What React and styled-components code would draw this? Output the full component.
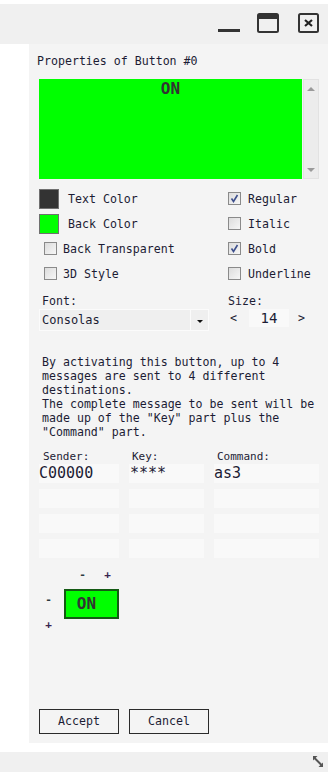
import React from "react";
import styled, { createGlobalStyle } from "styled-components";

const GlobalStyle = createGlobalStyle`
  html, body {
    margin: 0;
    padding: 0;
    background: #ffffff;
  }
  body {
    font-family: "DejaVu Sans Mono", "Liberation Mono", monospace;
    color: #1c1c34;
  }
`;

const Page = styled.div`
  width: 334px;
  padding-top: 4px;
`;

const TopBar = styled.div`
  width: 328px;
  height: 40px;
  background: #f0f0f0;
  display: flex;
  justify-content: flex-end;
  align-items: flex-start;
  box-sizing: border-box;
  padding: 9px 9px 0 0;
`;

const WinIcon = styled.svg`
  display: block;
  margin-left: ${(p) => p.gap || 0}px;
`;

const Body = styled.div`
  display: flex;
`;

const Gutter = styled.div`
  width: 29px;
  flex-shrink: 0;
`;

const Panel = styled.div`
  width: 299px;
  height: 699px;
  background: #f4f4f4;
  box-sizing: border-box;
  padding: 10px 0 9px 10px;
  display: flex;
  flex-direction: column;
  font-size: 11.6px;
  line-height: 14px;
`;

const Title = styled.div`
  margin-left: -2px;
  height: 14px;
`;

const PreviewRow = styled.div`
  display: flex;
  margin-top: 11px;
  height: 100px;
`;

const PreviewBox = styled.div`
  width: 263px;
  background: ${(p) => p.bg};
  color: #333333;
  font-weight: bold;
  font-size: 16px;
  line-height: 18px;
  text-align: center;
  padding-top: 1px;
  box-sizing: border-box;
`;

const Scrollbar = styled.div`
  width: 16px;
  margin-left: 1px;
  background: #ececec;
  border: 1px solid #e2e2e2;
  box-sizing: border-box;
  display: flex;
  flex-direction: column;
  justify-content: space-between;
  align-items: center;
  padding: 7px 0 6px;
`;

const Arrow = styled.div`
  width: 0;
  height: 0;
  border-left: 4px solid transparent;
  border-right: 4px solid transparent;
  ${(p) => (p.down ? "border-top: 4px solid #9a9a9a;" : "border-bottom: 4px solid #9a9a9a;")}
`;

const Options = styled.div`
  display: grid;
  grid-template-columns: 189px auto;
  grid-auto-rows: 25px;
  margin-top: 7px;
`;

const OptionRow = styled.div`
  display: flex;
  align-items: center;
  padding-left: ${(p) => p.indent || 0}px;
  gap: ${(p) => p.space || 7}px;
`;

const Swatch = styled.div`
  width: 20px;
  height: 20px;
  box-sizing: border-box;
  border: 1px solid #707070;
  background: ${(p) => p.color};
  margin-right: 1px;
`;

const Box = styled.div`
  width: 13px;
  height: 13px;
  box-sizing: border-box;
  border: 1px solid #8a8a8a;
  background: linear-gradient(135deg, #dcdcdc, #f7f7f7);
  display: flex;
  align-items: center;
  justify-content: center;
`;

const FontRow = styled.div`
  display: grid;
  grid-template-columns: 189px auto;
  margin-top: 8px;
`;

const FieldLabel = styled.div`
  height: 14px;
  margin-left: ${(p) => p.shift || 0}px;
  margin-bottom: 1px;
  font-size: ${(p) => p.size || 11.6}px;
`;

const Select = styled.div`
  width: 170px;
  height: 22px;
  box-sizing: border-box;
  border: 1px solid #fbfbfb;
  background: #efefef;
  display: flex;
  align-items: center;
  font-size: 12px;
`;

const SelectText = styled.div`
  flex: 1;
  padding-left: 2px;
`;

const SelectButton = styled.div`
  width: 17px;
  height: 100%;
  border-left: 1px solid #fbfbfb;
  display: flex;
  align-items: center;
  justify-content: center;
`;

const SmallArrow = styled.div`
  width: 0;
  height: 0;
  border-left: 3px solid transparent;
  border-right: 3px solid transparent;
  border-top: 3px solid #111;
  margin-top: 2px;
`;

const SizeControls = styled.div`
  display: flex;
  align-items: center;
  height: 18px;
  padding-left: 2px;
`;

const Stepper = styled.span`
  width: 7px;
  text-align: center;
  margin-left: ${(p) => p.gap || 0}px;
`;

const SizeValue = styled.div`
  width: 40px;
  height: 18px;
  margin-left: 12px;
  background: #f9f9f9;
  font-size: 14px;
  line-height: 18px;
  text-align: center;
`;

const Description = styled.div`
  margin-top: 24px;
  padding-left: 3px;
  white-space: nowrap;
`;

const Fields = styled.div`
  display: grid;
  grid-template-columns: 80px 75px 105px;
  column-gap: 10px;
  row-gap: 6px;
  margin-top: 11px;
`;

const HeadCell = styled.div`
  font-size: 11px;
  height: 14px;
  padding-left: ${(p) => p.shift || 0}px;
  margin-bottom: -6px;
`;

const Input = styled.div`
  height: 19px;
  background: #f9f9f9;
  font-size: 15px;
  line-height: 19px;
  padding-left: ${(p) => p.shift || 0}px;
  white-space: nowrap;
  overflow: hidden;
`;

const Designer = styled.div`
  display: grid;
  grid-template-columns: 25px 55px;
  grid-template-rows: 21px 30px 30px;
  margin-top: 10px;
`;

const TopSteps = styled.div`
  grid-column: 2;
  grid-row: 1;
  display: flex;
  gap: 18px;
  padding-left: 15px;
`;

const SideSteps = styled.div`
  grid-column: 1;
  grid-row: 2 / 4;
  display: flex;
  flex-direction: column;
  gap: 11px;
  padding: 4px 0 0 6px;
`;

const Step = styled.span`
  width: 7px;
  text-align: center;
  font-size: 11px;
  font-weight: bold;
  color: ${(p) => (p.plus ? "#3a2450" : "#2a3a40")};
`;

const MiniButton = styled.div`
  grid-column: 2;
  grid-row: 2;
  background: #00ff00;
  border: 2px solid #145a14;
  box-sizing: border-box;
  color: #333333;
  font-weight: bold;
  font-size: 16px;
  line-height: 26px;
  text-align: center;
  padding-right: 10px;
`;

const Actions = styled.div`
  margin-top: auto;
  display: flex;
  gap: 10px;
`;

const ActionButton = styled.div`
  width: 80px;
  height: 25px;
  box-sizing: border-box;
  border: 1px solid #2b2b2b;
  font-size: 11.6px;
  line-height: 23px;
  text-align: center;
`;

const BottomBar = styled.div`
  width: 328px;
  height: 20px;
  margin-top: 9px;
  background: #f0f0f0;
  display: flex;
  justify-content: flex-end;
  align-items: flex-start;
  box-sizing: border-box;
  padding: 3px 4px 0 0;
`;

const Check = () => (
  <svg width="9" height="9" viewBox="0 0 9 9">
    <path d="M1.5 4.5 L3.5 7.5 L7.5 1" fill="none" stroke="#3d4f8c" strokeWidth="1.6" />
  </svg>
);

const CheckOption = ({ checked, label, indent, space }) => (
  <OptionRow indent={indent} space={space}>
    <Box>{checked && <Check />}</Box>
    <span>{label}</span>
  </OptionRow>
);

export default function App() {
  const rows = [
    ["C00000", "****", "as3"],
    ["", "", ""],
    ["", "", ""],
    ["", "", ""],
  ];

  return (
    <Page>
      <GlobalStyle />
      <TopBar>
        <WinIcon width="22" height="20" viewBox="0 0 22 20">
          <rect x="0" y="16" width="22" height="3" fill="#333" />
        </WinIcon>
        <WinIcon gap={17} width="22" height="20" viewBox="0 0 22 20">
          <rect x="1" y="1" width="20" height="18" rx="1.5" fill="none" stroke="#333" strokeWidth="2" />
          <rect x="1" y="1" width="20" height="5" fill="#333" />
        </WinIcon>
        <WinIcon gap={19} width="21" height="20" viewBox="0 0 21 20">
          <rect x="1" y="1" width="19" height="18" rx="1.5" fill="none" stroke="#333" strokeWidth="2" />
          <path d="M7 7 L14 13 M14 7 L7 13" stroke="#222" strokeWidth="2.2" />
        </WinIcon>
      </TopBar>

      <Body>
        <Gutter />
        <Panel>
          <Title>Properties of Button #0</Title>

          <PreviewRow>
            <PreviewBox bg="#00ff00">ON</PreviewBox>
            <Scrollbar>
              <Arrow />
              <Arrow down />
            </Scrollbar>
          </PreviewRow>

          <Options>
            <OptionRow space={8}>
              <Swatch color="#333333" />
              <span>Text Color</span>
            </OptionRow>
            <CheckOption checked label="Regular" />
            <OptionRow space={8}>
              <Swatch color="#00ff00" />
              <span>Back Color</span>
            </OptionRow>
            <CheckOption label="Italic" />
            <CheckOption label="Back Transparent" indent={5} space={6} />
            <CheckOption checked label="Bold" />
            <CheckOption label="3D Style" indent={5} space={6} />
            <CheckOption label="Underline" />
          </Options>

          <FontRow>
            <div>
              <FieldLabel shift={3}>Font:</FieldLabel>
              <Select>
                <SelectText>Consolas</SelectText>
                <SelectButton>
                  <SmallArrow />
                </SelectButton>
              </Select>
            </div>
            <div>
              <FieldLabel>Size:</FieldLabel>
              <SizeControls>
                <Stepper>&lt;</Stepper>
                <SizeValue>14</SizeValue>
                <Stepper gap={9}>&gt;</Stepper>
              </SizeControls>
            </div>
          </FontRow>

          <Description>
            By activating this button, up to 4<br />
            messages are sent to 4 different<br />
            destinations.<br />
            The complete message to be sent will be<br />
            made up of the "Key" part plus the<br />
            "Command" part.
          </Description>

          <Fields>
            <HeadCell shift={4}>Sender:</HeadCell>
            <HeadCell shift={3}>Key:</HeadCell>
            <HeadCell shift={3}>Command:</HeadCell>
            {rows.map((r, i) =>
              r.map((v, j) => (
                <Input key={i + "-" + j} shift={j === 1 ? 1 : 0}>
                  {v}
                </Input>
              ))
            )}
          </Fields>

          <Designer>
            <TopSteps>
              <Step>-</Step>
              <Step plus>+</Step>
            </TopSteps>
            <SideSteps>
              <Step>-</Step>
              <Step plus>+</Step>
            </SideSteps>
            <MiniButton>ON</MiniButton>
          </Designer>

          <Actions>
            <ActionButton>Accept</ActionButton>
            <ActionButton>Cancel</ActionButton>
          </Actions>
        </Panel>
      </Body>

      <BottomBar>
        <svg width="12" height="13" viewBox="0 0 12 13">
          <path d="M2.5 3 L9.5 10" stroke="#555" strokeWidth="2" />
          <path d="M1 1 L5.5 1 L1 5.5 Z" fill="#555" />
          <path d="M11 12 L6.5 12 L11 7.5 Z" fill="#555" />
        </svg>
      </BottomBar>
    </Page>
  );
}
